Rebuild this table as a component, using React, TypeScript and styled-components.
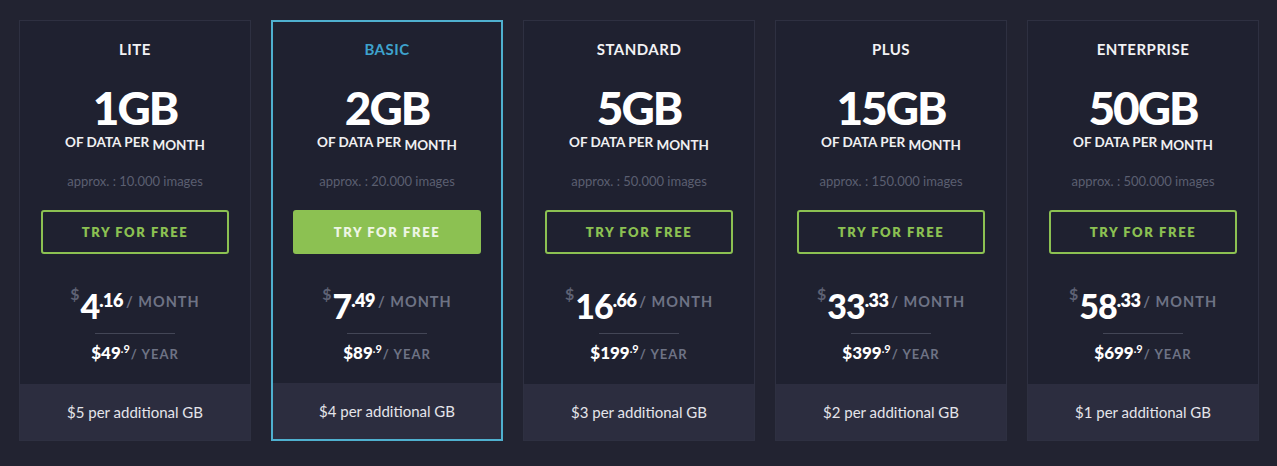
import styled, { createGlobalStyle } from 'styled-components';

const GlobalStyle = createGlobalStyle`
	html, body {
		margin: 0;
		padding: 0;
		background: #222331;
	}
	body {
		font-family: Lato, 'Liberation Sans', sans-serif;
		-webkit-font-smoothing: antialiased;
	}
`;

type Plan = {
	name: string;
	data: string;
	images: string;
	whole: string;
	cents: string;
	year: string;
	extra: string;
	featured?: boolean;
};

const plans: Plan[] = [
	{ name: 'LITE', data: '1GB', images: '10.000', whole: '4', cents: '.16', year: '49', extra: '$5' },
	{ name: 'BASIC', data: '2GB', images: '20.000', whole: '7', cents: '.49', year: '89', extra: '$4', featured: true },
	{ name: 'STANDARD', data: '5GB', images: '50.000', whole: '16', cents: '.66', year: '199', extra: '$3' },
	{ name: 'PLUS', data: '15GB', images: '150.000', whole: '33', cents: '.33', year: '399', extra: '$2' },
	{ name: 'ENTERPRISE', data: '50GB', images: '500.000', whole: '58', cents: '.33', year: '699', extra: '$1' },
];

// вся страница
const Page = styled.div`
	display: flex;
	gap: 20px;
	padding: 20px 18px 25px 19px;
`;

// карточка тарифа
const Card = styled.div<{ $featured?: boolean }>`
	width: 232px;
	height: 421px;
	box-sizing: border-box;
	display: flex;
	flex-direction: column;
	background: #1f2130;
	border: ${(p) => (p.$featured ? '2px solid #4fb0cf' : '1px solid #2e3041')};
`;

// верхняя часть карточки
const Body = styled.div`
	flex: 1;
	display: flex;
	flex-direction: column;
	align-items: center;
`;

const Title = styled.div<{ $featured?: boolean }>`
	margin-top: ${(p) => (p.$featured ? '17px' : '18px')};
	font-size: 15px;
	line-height: 20px;
	font-weight: 700;
	letter-spacing: 0.5px;
	color: ${(p) => (p.$featured ? '#3ea3cd' : '#f2f2f4')};
`;

const Amount = styled.div`
	margin-top: 26px;
	font-size: 46px;
	line-height: 46px;
	font-weight: 900;
	letter-spacing: -2px;
	color: #ffffff;
`;

const Per = styled.div`
	margin-top: 3px;
	font-size: 13.5px;
	line-height: 16px;
	font-weight: 700;
	color: #f0f0f2;
`;

const Month = styled.span`
	display: inline-block;
	vertical-align: -3px;
`;

const Approx = styled.div`
	margin-top: 20px;
	font-size: 13px;
	line-height: 16px;
	color: #5b5f70;
`;

// кнопка
const Button = styled.button<{ $filled?: boolean }>`
	margin-top: 21px;
	width: 188px;
	height: 44px;
	box-sizing: border-box;
	border-radius: 3px;
	border: 2px solid #8cc152;
	background: ${(p) => (p.$filled ? '#8cc152' : 'transparent')};
	color: ${(p) => (p.$filled ? '#eef6e4' : '#8cc152')};
	font-family: Lato, 'Liberation Sans', sans-serif;
	font-size: 13px;
	font-weight: 800;
	letter-spacing: 1.6px;
	cursor: pointer;
`;

const PriceRow = styled.div`
	margin-top: 36px;
	display: flex;
	align-items: flex-start;
`;

const Dollar = styled.span`
	margin-top: -3px;
	margin-right: 1px;
	font-size: 16px;
	line-height: 14px;
	font-weight: 700;
	color: #5e6274;
`;

const Whole = styled.span`
	font-size: 34px;
	line-height: 32px;
	font-weight: 900;
	letter-spacing: -1px;
	color: #ffffff;
`;

const Cents = styled.span`
	margin-top: 2px;
	font-size: 18px;
	line-height: 16px;
	font-weight: 800;
	letter-spacing: -0.5px;
	color: #ffffff;
`;

const Unit = styled.span<{ $small?: boolean }>`
	margin-top: ${(p) => (p.$small ? '3px' : '5px')};
	margin-left: ${(p) => (p.$small ? '1px' : '3px')};
	font-size: ${(p) => (p.$small ? '13px' : '14.5px')};
	line-height: 14px;
	font-weight: 700;
	letter-spacing: 1px;
	color: #6e7385;
`;

const Divider = styled.div`
	margin-top: 11px;
	width: 80px;
	height: 1px;
	background: #434656;
`;

const YearRow = styled.div`
	margin-top: 10px;
	display: flex;
	align-items: flex-start;
`;

const YearPrice = styled.span`
	font-size: 17px;
	line-height: 17px;
	font-weight: 900;
	color: #ffffff;
`;

const YearCents = styled.span`
	margin-top: -1px;
	font-size: 11px;
	line-height: 11px;
	font-weight: 700;
	color: #ffffff;
`;

// нижняя часть карточки
const Footer = styled.div`
	height: 56px;
	flex-shrink: 0;
	display: flex;
	align-items: center;
	justify-content: center;
	background: #2c2d3f;
	font-size: 15px;
	color: #e4e4ea;
`;

export default function App() {
	return (
		<>
			<GlobalStyle />
			<Page>
				{plans.map((p) => (
					<Card key={p.name} $featured={p.featured}>
						<Body>
							<Title $featured={p.featured}>{p.name}</Title>
							<Amount>{p.data}</Amount>
							<Per>
								OF DATA PER <Month>MONTH</Month>
							</Per>
							<Approx>approx. : {p.images} images</Approx>
							<Button $filled={p.featured}>TRY FOR FREE</Button>
							<PriceRow>
								<Dollar>$</Dollar>
								<Whole>{p.whole}</Whole>
								<Cents>{p.cents}</Cents>
								<Unit>/ MONTH</Unit>
							</PriceRow>
							<Divider />
							<YearRow>
								<YearPrice>${p.year}</YearPrice>
								<YearCents>.9</YearCents>
								<Unit $small>/ YEAR</Unit>
							</YearRow>
						</Body>
						<Footer>{p.extra} per additional GB</Footer>
					</Card>
				))}
			</Page>
		</>
	);
}
